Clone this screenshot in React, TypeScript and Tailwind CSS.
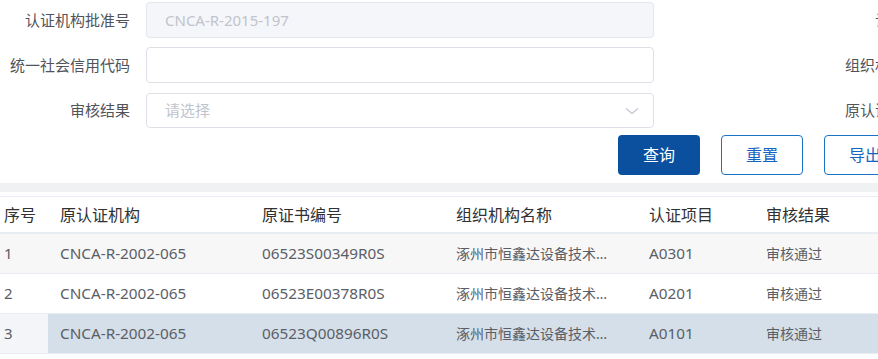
import React from 'react'

const font = { fontFamily: '"Noto Sans", "Noto Sans CJK SC", sans-serif' }

const rows = [
  { no: '1', org: 'CNCA-R-2002-065', cert: '06523S00349R0S', name: '涿州市恒鑫达设备技术有限公司', item: 'A0301', result: '审核通过' },
  { no: '2', org: 'CNCA-R-2002-065', cert: '06523E00378R0S', name: '涿州市恒鑫达设备技术有限公司', item: 'A0201', result: '审核通过' },
  { no: '3', org: 'CNCA-R-2002-065', cert: '06523Q00896R0S', name: '涿州市恒鑫达设备技术有限公司', item: 'A0101', result: '审核通过' },
]

const cols = 'grid grid-cols-[48px_202px_194px_193px_117px_1fr]'

const FormRow: React.FC<{ label: string; right: string; children: React.ReactNode; className?: string }> = ({ label, right, children, className }) => (
  <div className={`flex items-center ${className ?? ''}`}>
    <div className="w-[130px] shrink-0 text-right text-[15px] text-[#505359]">{label}</div>
    <div className="ml-4 w-[508px] shrink-0">{children}</div>
    <div className="ml-[151px] w-[130px] shrink-0 whitespace-nowrap text-right text-[15px] text-[#505359]">{right}</div>
  </div>
)

export default function App() {
  return (
    <div className="h-[359px] w-[878px] overflow-hidden bg-white" style={font}>
      <div className="pt-[2px]">
        <FormRow label="认证机构批准号" right="认证项目">
          <div className="flex h-9 items-center rounded border border-[#e4e7ed] bg-[#f5f6fa] px-[18px] text-[15px] text-[#c0c4cc]">
            CNCA-R-2015-197
          </div>
        </FormRow>
        <FormRow label="统一社会信用代码" right="组织机构名称" className="mt-[9px]">
          <div className="h-9 rounded border border-[#dcdfe6] bg-white" />
        </FormRow>
        <FormRow label="审核结果" right="原认证书编号" className="mt-[10px]">
          <div className="flex h-[35px] items-center justify-between rounded border border-[#dcdfe6] bg-white pl-[18px] pr-[13px] text-[15px] text-[#c0c4cc]">
            <span>请选择</span>
            <svg width="16" height="16" viewBox="0 0 16 16" fill="none">
              <path d="M2 5.5 L8 10.5 L14 5.5" stroke="#c0c4cc" strokeWidth="1.2" />
            </svg>
          </div>
        </FormRow>
      </div>

      <div className="mt-[7px] flex gap-[21px] pl-[618px]">
        <button className="h-10 w-[82px] shrink-0 rounded bg-[#0b509f] text-[16px] text-white">查询</button>
        <button className="h-10 w-[82px] shrink-0 rounded border border-[#1a73c6] bg-white text-[16px] text-[#1565c0]">重置</button>
        <button className="h-10 w-[82px] shrink-0 rounded border border-[#1a73c6] bg-white text-[16px] text-[#1565c0]">导出</button>
      </div>

      <div className="mt-[8px] h-[9px] bg-[#f0f1f3]" />
      <div className="mt-[4px] border-t border-[#e8ecf3]">
        <div className={`${cols} h-[37px] items-center border-b-2 border-[#e8ecf3] text-[16px] text-[#303133]`}>
          <div className="pl-1">序号</div>
          <div className="pl-3">原认证机构</div>
          <div className="pl-3">原证书编号</div>
          <div className="pl-3">组织机构名称</div>
          <div className="pl-3">认证项目</div>
          <div className="pl-3">审核结果</div>
        </div>
        {rows.map((r, i) => {
          const bg = i === 0 ? 'bg-[#f7f7f8]' : i === 2 ? 'bg-[#d5dfe9]' : 'bg-white'
          return (
            <div key={r.no} className={`${cols} h-10 items-center border-b border-[#e8ecf3] text-[14px] text-[#5a5e66] ${bg}`}>
              <div className={`flex h-full items-center pl-1 text-[15px] ${i === 2 ? 'bg-[#f3f5f8]' : ''}`}>{r.no}</div>
              <div className="pl-3 text-[15.3px]">{r.org}</div>
              <div className="pl-3 text-[15.3px]">{r.cert}</div>
              <div className="truncate pl-3 pr-[20px]">{r.name}</div>
              <div className="pl-3 text-[15.3px]">{r.item}</div>
              <div className="pl-3">{r.result}</div>
            </div>
          )
        })}
      </div>
    </div>
  )
}
